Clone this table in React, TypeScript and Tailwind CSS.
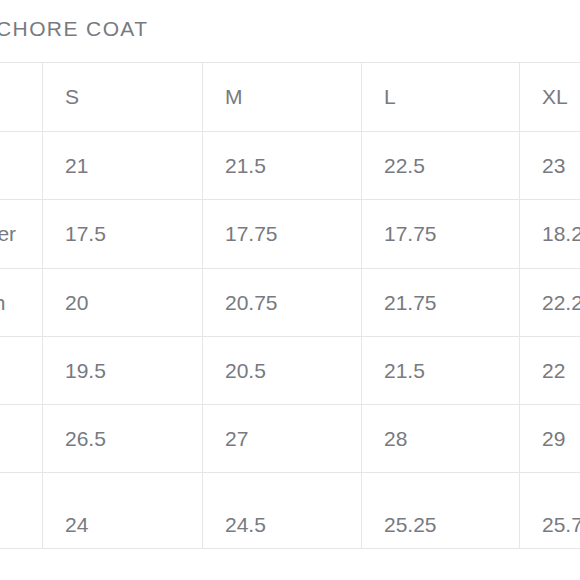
const sizes = ["S", "M", "L", "XL"]

const rows: { label: string; values: string[]; tall?: boolean }[] = [
  { label: "Chest", values: ["21", "21.5", "22.5", "23"] },
  { label: "Shoulder", values: ["17.5", "17.75", "17.75", "18.25"] },
  { label: "Breadth", values: ["20", "20.75", "21.75", "22.25"] },
  { label: "Waist", values: ["19.5", "20.5", "21.5", "22"] },
  { label: "Length", values: ["26.5", "27", "28", "29"] },
  { label: "Sleeve", values: ["24", "24.5", "25.25", "25.75"], tall: true },
]

const heights = ["h-[69px]", "h-[68px]", "h-[69px]", "h-[68px]", "h-[68px]", "h-[68px]", "h-[76px]"]

function Row({ label, values, h, tall }: { label: string; values: string[]; h: string; tall?: boolean }) {
  const align = tall ? "items-start pt-[40px]" : "items-center"
  return (
    <div className={`grid grid-cols-[133px_160px_159px_158px_160px] border-b border-[#e6e6e6] ${h}`}>
      <div className={`flex ${align} border-l border-[#e6e6e6] pl-[22px] whitespace-nowrap`}>{label}</div>
      {values.map((v, i) => (
        <div key={i} className={`flex ${align} border-l border-[#e6e6e6] pl-[22px] whitespace-nowrap`}>
          {v}
        </div>
      ))}
    </div>
  )
}

export default function App() {
  return (
    <div className="w-[580px] h-[580px] overflow-hidden bg-white font-['Liberation_Sans',Arial,sans-serif] text-[21px] leading-[24px] text-[#777a80]">
      <div className="h-[62px] pt-[17px] ml-[-4px] tracking-[1.4px] whitespace-nowrap">CHORE COAT</div>
      <div className="ml-[-91px] w-[770px] border-t border-[#e6e6e6]">
        <Row label="" values={sizes} h={heights[0]} />
        {rows.map((r, i) => (
          <Row key={r.label} label={r.label} values={r.values} h={heights[i + 1]} tall={r.tall} />
        ))}
      </div>
    </div>
  )
}
